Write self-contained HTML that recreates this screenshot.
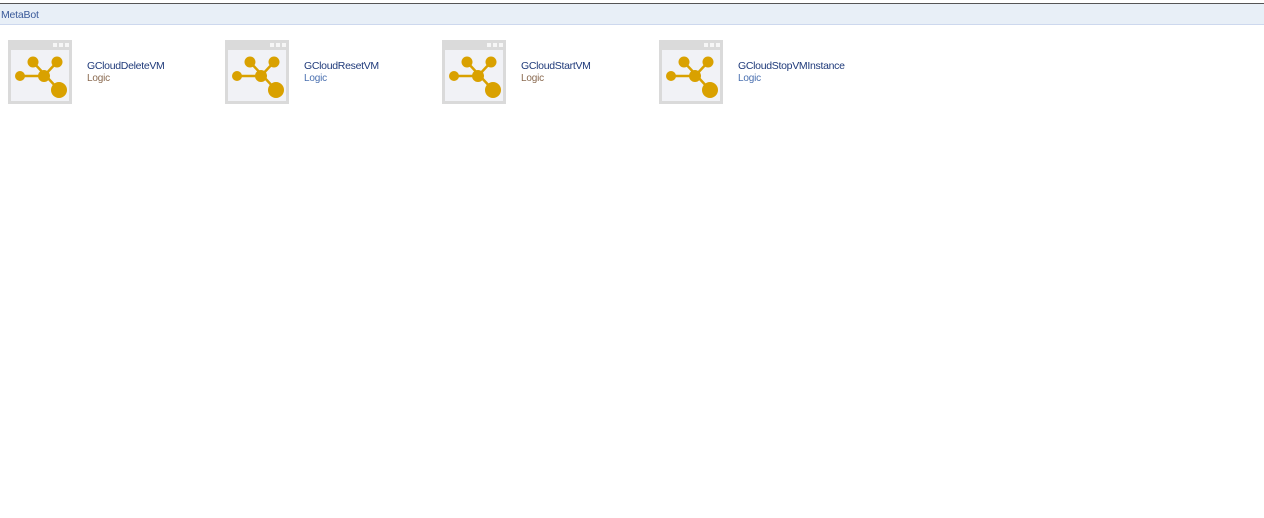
<!DOCTYPE html>
<html><head><style>
body{margin:0;width:1264px;height:518px;background:#fff;font-family:"Liberation Sans",Tahoma,sans-serif;position:relative;overflow:hidden}
.top{position:absolute;left:0;top:3px;width:1264px;height:1px;background:#555}
.bar{position:absolute;left:0;top:4px;width:1264px;height:20px;background:#e8eff7;border-bottom:1px solid #cdd8ee}
.bar span{position:absolute;left:1px;top:5px;font-size:10.5px;letter-spacing:-0.2px;color:#3a5a9a}
.item{position:absolute;top:40px;width:217px;height:64px}
.ic{position:absolute;left:0;top:0}
.nm{position:absolute;left:79px;top:20px;font-size:10.5px;letter-spacing:-0.3px;color:#1f3a7a;white-space:nowrap}
.lg{position:absolute;left:79px;top:33px;font-size:10px;letter-spacing:-0.2px}
</style></head><body>
<div class="top"></div>
<div class="bar"><span>MetaBot</span></div>
<div class="item" style="left:8px"><svg class="ic" width="64" height="64"><rect width="64" height="64" fill="#dadada"/><rect x="3" y="10" width="58" height="51" fill="#f1f2f6"/><rect x="45" y="3" width="4" height="4" fill="#f6f6f6"/><rect x="51" y="3" width="4" height="4" fill="#f6f6f6"/><rect x="57" y="3" width="4" height="4" fill="#f6f6f6"/><g fill="#d9a100" stroke="#d9a100" stroke-width="2.5"><line x1="12" y1="36" x2="36" y2="36"/><line x1="25" y1="22" x2="51" y2="50"/><line x1="49" y1="22" x2="36" y2="36"/><circle cx="12" cy="36" r="5" stroke="none"/><circle cx="25" cy="22" r="5.5" stroke="none"/><circle cx="49" cy="22" r="5.5" stroke="none"/><circle cx="36" cy="36" r="6" stroke="none"/><circle cx="51" cy="50" r="8" stroke="none"/></g></svg><div class="nm">GCloudDeleteVM</div><div class="lg" style="color:#8a6a50">Logic</div></div>
<div class="item" style="left:225px"><svg class="ic" width="64" height="64"><rect width="64" height="64" fill="#dadada"/><rect x="3" y="10" width="58" height="51" fill="#f1f2f6"/><rect x="45" y="3" width="4" height="4" fill="#f6f6f6"/><rect x="51" y="3" width="4" height="4" fill="#f6f6f6"/><rect x="57" y="3" width="4" height="4" fill="#f6f6f6"/><g fill="#d9a100" stroke="#d9a100" stroke-width="2.5"><line x1="12" y1="36" x2="36" y2="36"/><line x1="25" y1="22" x2="51" y2="50"/><line x1="49" y1="22" x2="36" y2="36"/><circle cx="12" cy="36" r="5" stroke="none"/><circle cx="25" cy="22" r="5.5" stroke="none"/><circle cx="49" cy="22" r="5.5" stroke="none"/><circle cx="36" cy="36" r="6" stroke="none"/><circle cx="51" cy="50" r="8" stroke="none"/></g></svg><div class="nm">GCloudResetVM</div><div class="lg" style="color:#4a70b0">Logic</div></div>
<div class="item" style="left:442px"><svg class="ic" width="64" height="64"><rect width="64" height="64" fill="#dadada"/><rect x="3" y="10" width="58" height="51" fill="#f1f2f6"/><rect x="45" y="3" width="4" height="4" fill="#f6f6f6"/><rect x="51" y="3" width="4" height="4" fill="#f6f6f6"/><rect x="57" y="3" width="4" height="4" fill="#f6f6f6"/><g fill="#d9a100" stroke="#d9a100" stroke-width="2.5"><line x1="12" y1="36" x2="36" y2="36"/><line x1="25" y1="22" x2="51" y2="50"/><line x1="49" y1="22" x2="36" y2="36"/><circle cx="12" cy="36" r="5" stroke="none"/><circle cx="25" cy="22" r="5.5" stroke="none"/><circle cx="49" cy="22" r="5.5" stroke="none"/><circle cx="36" cy="36" r="6" stroke="none"/><circle cx="51" cy="50" r="8" stroke="none"/></g></svg><div class="nm">GCloudStartVM</div><div class="lg" style="color:#8a6a50">Logic</div></div>
<div class="item" style="left:659px"><svg class="ic" width="64" height="64"><rect width="64" height="64" fill="#dadada"/><rect x="3" y="10" width="58" height="51" fill="#f1f2f6"/><rect x="45" y="3" width="4" height="4" fill="#f6f6f6"/><rect x="51" y="3" width="4" height="4" fill="#f6f6f6"/><rect x="57" y="3" width="4" height="4" fill="#f6f6f6"/><g fill="#d9a100" stroke="#d9a100" stroke-width="2.5"><line x1="12" y1="36" x2="36" y2="36"/><line x1="25" y1="22" x2="51" y2="50"/><line x1="49" y1="22" x2="36" y2="36"/><circle cx="12" cy="36" r="5" stroke="none"/><circle cx="25" cy="22" r="5.5" stroke="none"/><circle cx="49" cy="22" r="5.5" stroke="none"/><circle cx="36" cy="36" r="6" stroke="none"/><circle cx="51" cy="50" r="8" stroke="none"/></g></svg><div class="nm">GCloudStopVMInstance</div><div class="lg" style="color:#4a70b0">Logic</div></div>
</body></html>
